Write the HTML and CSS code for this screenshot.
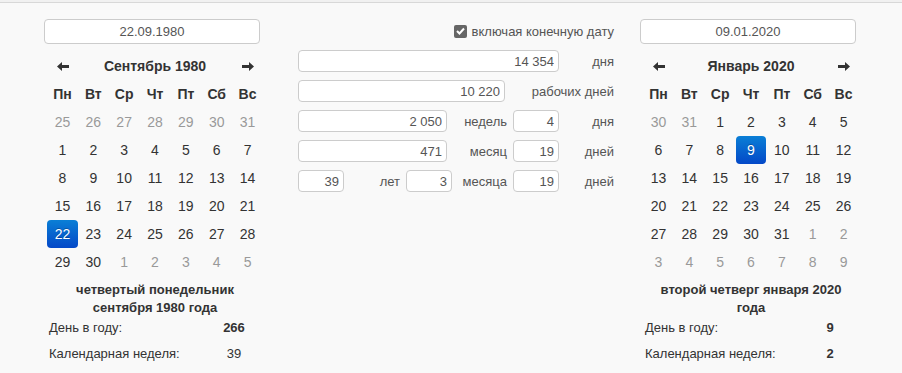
FILE: index.html
```html
<!DOCTYPE html>
<html lang="ru">
<head>
    <meta charset="UTF-8">
    <title>Калькулятор дат</title>
    <link rel="stylesheet" href="styles.css">
</head>
<body>
<div class="page">

    <!-- Start date -->
    <div class="date-col">
        <input type="text" class="date-input" value="22.09.1980" readonly>
        <div class="calendar">
            <div class="cal-head">
                <span class="cal-arrow"><svg width="12" height="9" viewBox="0 0 12 9"><path d="M0 4.5L5 0V3H12V6H5V9Z"/></svg></span>
                <span class="cal-title">Сентябрь 1980</span>
                <span class="cal-arrow"><svg width="12" height="9" viewBox="0 0 12 9"><path d="M12 4.5L7 0V3H0V6H7V9Z"/></svg></span>
            </div>
            <div class="cal-grid">
                <span class="dow">Пн</span><span class="dow">Вт</span><span class="dow">Ср</span><span class="dow">Чт</span><span class="dow">Пт</span><span class="dow">Сб</span><span class="dow">Вс</span>
                <span class="day old">25</span><span class="day old">26</span><span class="day old">27</span><span class="day old">28</span><span class="day old">29</span><span class="day old">30</span><span class="day old">31</span>
                <span class="day">1</span><span class="day">2</span><span class="day">3</span><span class="day">4</span><span class="day">5</span><span class="day">6</span><span class="day">7</span>
                <span class="day">8</span><span class="day">9</span><span class="day">10</span><span class="day">11</span><span class="day">12</span><span class="day">13</span><span class="day">14</span>
                <span class="day">15</span><span class="day">16</span><span class="day">17</span><span class="day">18</span><span class="day">19</span><span class="day">20</span><span class="day">21</span>
                <span class="day active">22</span><span class="day">23</span><span class="day">24</span><span class="day">25</span><span class="day">26</span><span class="day">27</span><span class="day">28</span>
                <span class="day">29</span><span class="day">30</span><span class="day old">1</span><span class="day old">2</span><span class="day old">3</span><span class="day old">4</span><span class="day old">5</span>
            </div>
            <div class="day-title">четвертый понедельник сентября 1980 года</div>
            <div class="info-row"><span class="info-label">День в году:</span><span class="info-value bold">266</span></div>
            <div class="info-row"><span class="info-label">Календарная неделя:</span><span class="info-value">39</span></div>
        </div>
    </div>

    <!-- Difference -->
    <div class="diff-col">
        <div class="check-row">
            <span class="check-box"><svg width="9" height="8" viewBox="0 0 9 8"><path d="M1 4L3.5 6.5L8 1.5" fill="none" stroke="#fff" stroke-width="2"/></svg></span>
            <span>включая конечную дату</span>
        </div>
        <div class="diff-row">
            <input type="text" class="num w-261" value="14 354" readonly>
            <span class="unit w-55">дня</span>
        </div>
        <div class="diff-row">
            <input type="text" class="num w-207" value="10 220" readonly>
            <span class="unit w-109">рабочих дней</span>
        </div>
        <div class="diff-row">
            <input type="text" class="num w-149" value="2 050" readonly>
            <span class="unit w-66">недель</span>
            <input type="text" class="num w-46" value="4" readonly>
            <span class="unit w-55">дня</span>
        </div>
        <div class="diff-row">
            <input type="text" class="num w-149" value="471" readonly>
            <span class="unit w-66">месяц</span>
            <input type="text" class="num w-46" value="19" readonly>
            <span class="unit w-55">дней</span>
        </div>
        <div class="diff-row">
            <input type="text" class="num w-46" value="39" readonly>
            <span class="unit w-62">лет</span>
            <input type="text" class="num w-46" value="3" readonly>
            <span class="unit w-61">месяца</span>
            <input type="text" class="num w-46" value="19" readonly>
            <span class="unit w-55">дней</span>
        </div>
    </div>

    <!-- End date -->
    <div class="date-col">
        <input type="text" class="date-input" value="09.01.2020" readonly>
        <div class="calendar">
            <div class="cal-head">
                <span class="cal-arrow"><svg width="12" height="9" viewBox="0 0 12 9"><path d="M0 4.5L5 0V3H12V6H5V9Z"/></svg></span>
                <span class="cal-title">Январь 2020</span>
                <span class="cal-arrow"><svg width="12" height="9" viewBox="0 0 12 9"><path d="M12 4.5L7 0V3H0V6H7V9Z"/></svg></span>
            </div>
            <div class="cal-grid">
                <span class="dow">Пн</span><span class="dow">Вт</span><span class="dow">Ср</span><span class="dow">Чт</span><span class="dow">Пт</span><span class="dow">Сб</span><span class="dow">Вс</span>
                <span class="day old">30</span><span class="day old">31</span><span class="day">1</span><span class="day">2</span><span class="day">3</span><span class="day">4</span><span class="day">5</span>
                <span class="day">6</span><span class="day">7</span><span class="day">8</span><span class="day active">9</span><span class="day">10</span><span class="day">11</span><span class="day">12</span>
                <span class="day">13</span><span class="day">14</span><span class="day">15</span><span class="day">16</span><span class="day">17</span><span class="day">18</span><span class="day">19</span>
                <span class="day">20</span><span class="day">21</span><span class="day">22</span><span class="day">23</span><span class="day">24</span><span class="day">25</span><span class="day">26</span>
                <span class="day">27</span><span class="day">28</span><span class="day">29</span><span class="day">30</span><span class="day">31</span><span class="day old">1</span><span class="day old">2</span>
                <span class="day old">3</span><span class="day old">4</span><span class="day old">5</span><span class="day old">6</span><span class="day old">7</span><span class="day old">8</span><span class="day old">9</span>
            </div>
            <div class="day-title">второй четверг января 2020 года</div>
            <div class="info-row"><span class="info-label">День в году:</span><span class="info-value bold">9</span></div>
            <div class="info-row"><span class="info-label">Календарная неделя:</span><span class="info-value bold">2</span></div>
        </div>
    </div>

</div>
</body>
</html>
```

FILE: styles.css
```css
/* General Page Styling */
body {
    margin: 0;
    background-color: #f9f9f9;
    font-family: "Liberation Sans", Arial, sans-serif;
    font-size: 13px;
    color: #333;
}

.page {
    display: flex;
    align-items: flex-start;
    border-top: 2px solid #f1f1f1;
    box-shadow: inset 0 1px 0 #d8d8d8;
    padding: 17px 0 0 44px;
    height: 354px;
    box-sizing: content-box;
}

/* Date columns */
.date-col {
    width: 220px;
}

.date-col + .diff-col {
    margin-left: 34px;
}

.diff-col + .date-col {
    margin-left: 26px;
}

.date-input {
    display: block;
    width: 216px;
    height: 25px;
    box-sizing: border-box;
    border: 1px solid #ccc;
    border-radius: 4px;
    background: #fff;
    font: 13px "Liberation Sans", Arial, sans-serif;
    color: #555;
    text-align: center;
    padding: 0;
    outline: none;
}

.calendar {
    width: 216px;
    margin: 8px 0 0 3px;
}

.cal-head {
    display: flex;
    align-items: center;
    height: 28px;
}

.cal-arrow {
    width: 31px;
    display: flex;
    justify-content: center;
    fill: #333;
}

.cal-title {
    flex: 1;
    text-align: center;
    font-size: 14px;
    font-weight: bold;
}

.cal-grid {
    display: grid;
    grid-template-columns: repeat(7, 1fr);
    grid-auto-rows: 28px;
}

.dow,
.day {
    display: flex;
    align-items: center;
    justify-content: center;
    font-size: 14px;
}

.dow {
    font-weight: bold;
}

.day.old {
    color: #999;
}

.day.active {
    color: #fff;
    border-radius: 4px;
    background-image: linear-gradient(to bottom, #0a7fd6, #0448c8);
    text-shadow: 0 -1px 0 rgba(0, 0, 0, 0.25);
}

.day-title {
    width: 196px;
    margin: 5px auto 0;
    text-align: center;
    font-weight: bold;
    line-height: 18px;
}

.info-row {
    display: flex;
    height: 20px;
    align-items: center;
    margin-left: 2px;
    margin-bottom: 6px;
}

.info-label {
    width: 165px;
}

.info-value {
    width: 40px;
    text-align: center;
}

.bold {
    font-weight: bold;
}

/* Difference column */
.diff-col {
    width: 316px;
    color: #555;
}

.check-row {
    display: flex;
    justify-content: flex-end;
    align-items: center;
    height: 24px;
    margin-bottom: 7px;
}

.check-box {
    width: 13px;
    height: 13px;
    border-radius: 2px;
    background-color: #666;
    display: flex;
    align-items: center;
    justify-content: center;
    margin-right: 5px;
}

.diff-row {
    display: flex;
    align-items: center;
    height: 22px;
    margin-bottom: 8px;
}

.num {
    height: 22px;
    box-sizing: border-box;
    border: 1px solid #ccc;
    border-radius: 4px;
    background: #fff;
    font: 13px "Liberation Sans", Arial, sans-serif;
    color: #555;
    text-align: right;
    padding: 0 4px;
    outline: none;
}

.unit {
    text-align: right;
    padding-right: 6px;
    box-sizing: border-box;
}

.unit:last-child {
    padding-right: 0;
}

.w-261 { width: 261px; }
.w-207 { width: 207px; }
.w-149 { width: 149px; }
.w-46 { width: 46px; }
.w-109 { width: 109px; }
.w-66 { width: 66px; }
.w-62 { width: 62px; }
.w-61 { width: 61px; }
.w-55 { width: 55px; }
```
